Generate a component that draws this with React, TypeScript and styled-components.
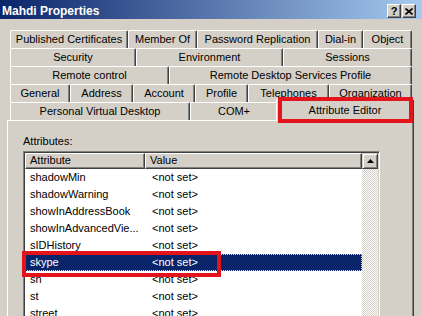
import React from "react";
import styled, { createGlobalStyle, css } from "styled-components";

const Global = createGlobalStyle`
  html, body { margin: 0; padding: 0; background: #D4D0C8; }
  body { font-family: "Liberation Sans", Arial, sans-serif; font-size: 11px; color: #000; }
`;

const Window = styled.div`
  position: relative;
  width: 422px;
  height: 316px;
  overflow: hidden;
  background: #d4d0c8;
  display: flex;
  flex-direction: column;
`;

const TitleBar = styled.div`
  height: 19px;
  flex: none;
  box-sizing: border-box;
  padding: 4px 6px 0 2px;
  background: linear-gradient(to right, #0a246a, #a6caf0);
  display: flex;
  align-items: flex-start;
`;

const Title = styled.div`
  flex: 1;
  color: #fff;
  font-weight: bold;
  font-size: 12px;
  line-height: 14px;
  white-space: nowrap;
`;

const CapButtons = styled.div`
  display: flex;
  gap: 1px;
`;

const CapButton = styled.div`
  width: 14px;
  height: 14px;
  box-sizing: border-box;
  background: #d4d0c8;
  border: 1px solid;
  border-color: #fff #404040 #404040 #fff;
  box-shadow: inset -1px -1px #808080;
  display: flex;
  align-items: center;
  justify-content: center;
  font-weight: bold;
  font-size: 11px;
  line-height: 1;
`;

const Body = styled.div`
  flex: 1;
  min-height: 0;
  display: flex;
  flex-direction: column;
  padding: 11px 8px 0 7px;
`;

const TabStack = styled.div`
  display: flex;
  flex-direction: column;
  margin: 0 2px 0 3px;
`;

const TabRow = styled.div`
  display: flex;
  height: 18px;
  align-items: flex-start;
`;

const Tab = styled.div<{ $w: number }>`
  width: ${(p) => p.$w}px;
  height: 18px;
  flex: none;
  box-sizing: border-box;
  background: #d4d0c8;
  border-top: 1px solid #fff;
  border-left: 1px solid #fff;
  border-right: 1px solid #404040;
  box-shadow: inset -1px 0 #808080;
  border-radius: 2px 2px 0 0;
  text-align: center;
  line-height: 17px;
  white-space: nowrap;
  overflow: hidden;
`;

const ActiveTab = styled(Tab)`
  position: relative;
  z-index: 1;
  height: 22px;
  margin: -3px -2px 0 -2px;
  line-height: 20px;
`;

const Panel = styled.div`
  flex: 1;
  box-sizing: border-box;
  border-top: 1px solid #fff;
  border-left: 1px solid #fff;
  border-right: 1px solid #404040;
  box-shadow: inset -1px 0 #808080;
  padding: 14px 0 0 15px;
  display: flex;
  flex-direction: column;
`;

const Label = styled.div`
  line-height: 13px;
  margin-bottom: 3px;
`;

const ListBox = styled.div`
  width: 357px;
  height: 180px;
  flex: none;
  box-sizing: border-box;
  border: 1px solid;
  border-color: #808080 #fff #fff #808080;
  box-shadow: inset 1px 1px #404040, inset -1px -1px #d4d0c8;
  padding: 1px;
  background: #fff;
  display: flex;
`;

const ListMain = styled.div`
  flex: 1;
  min-width: 0;
  display: flex;
  flex-direction: column;
`;

const HeaderRow = styled.div`
  display: flex;
  height: 16px;
  flex: none;
`;

const HeaderCell = styled.div<{ $w?: number }>`
  ${(p) => (p.$w ? `width: ${p.$w}px; flex: none;` : "flex: 1;")}
  box-sizing: border-box;
  background: #d4d0c8;
  border-top: 1px solid #fff;
  border-left: 1px solid #fff;
  border-right: 1px solid #404040;
  border-bottom: 1px solid #404040;
  box-shadow: inset -1px -1px #808080;
  padding-left: 4px;
  line-height: 13px;
  white-space: nowrap;
`;

const Row = styled.div<{ $sel?: boolean }>`
  display: flex;
  height: 17px;
  flex: none;
  line-height: 17px;
  white-space: nowrap;
  ${(p) =>
    p.$sel &&
    css`
      background: #0a246a;
      color: #fff;
      outline: 1px dotted #f5db95;
      outline-offset: -1px;
    `}
`;

const AttrCell = styled.div`
  width: 120px;
  flex: none;
  box-sizing: border-box;
  padding-left: 5px;
  overflow: hidden;
`;

const ValueCell = styled.div`
  flex: 1;
  padding-left: 7px;
`;

const ScrollBar = styled.div`
  width: 16px;
  flex: none;
  display: flex;
  flex-direction: column;
  background: repeating-conic-gradient(#d4d0c8 0 25%, #fff 0 50%) 0 0 / 2px 2px;
`;

const ScrollButton = styled.div`
  width: 16px;
  height: 16px;
  box-sizing: border-box;
  background: #d4d0c8;
  border: 1px solid;
  border-color: #d4d0c8 #404040 #404040 #d4d0c8;
  box-shadow: inset 1px 1px #fff, inset -1px -1px #808080;
  display: flex;
  align-items: center;
  justify-content: center;
`;

const Highlight = styled.div<{ $x: number; $y: number; $w: number; $h: number }>`
  position: absolute;
  left: ${(p) => p.$x}px;
  top: ${(p) => p.$y}px;
  width: ${(p) => p.$w}px;
  height: ${(p) => p.$h}px;
  box-sizing: border-box;
  border: 4px solid #e3141b;
  pointer-events: none;
  z-index: 5;
`;

const rows1: [string, number][] = [
  ["Published Certificates", 118],
  ["Member Of", 69],
  ["Password Replication", 121],
  ["Dial-in", 45],
  ["Object", 49],
];
const rows2: [string, number][] = [
  ["Security", 126],
  ["Environment", 147],
  ["Sessions", 129],
];
const rows3: [string, number][] = [
  ["Remote control", 159],
  ["Remote Desktop Services Profile", 243],
];
const rows4: [string, number][] = [
  ["General", 60],
  ["Address", 63],
  ["Account", 62],
  ["Profile", 53],
  ["Telephones", 81],
  ["Organization", 83],
];

const attrs = [
  "shadowMin",
  "shadowWarning",
  "showInAddressBook",
  "showInAdvancedVie...",
  "sIDHistory",
  "skype",
  "sn",
  "st",
  "street",
];

export default function App() {
  const tabRows = [rows1, rows2, rows3, rows4];
  return (
    <>
      <Global />
      <Window>
        <TitleBar>
          <Title>Mahdi Properties</Title>
          <CapButtons>
            <CapButton>?</CapButton>
            <CapButton>
              <svg width="8" height="7" viewBox="0 0 8 7">
                <path d="M0.5 0.5 L7.5 6.5 M7.5 0.5 L0.5 6.5" stroke="#000" strokeWidth="1.6" />
              </svg>
            </CapButton>
          </CapButtons>
        </TitleBar>
        <Body>
          <TabStack>
            {tabRows.map((r, i) => (
              <TabRow key={i}>
                {r.map(([t, w]) => (
                  <Tab key={t} $w={w}>
                    {t}
                  </Tab>
                ))}
              </TabRow>
            ))}
            <TabRow>
              <Tab $w={180}>Personal Virtual Desktop</Tab>
              <Tab $w={88}>COM+</Tab>
              <ActiveTab $w={138}>Attribute Editor</ActiveTab>
            </TabRow>
          </TabStack>
          <Panel>
            <Label>Attributes:</Label>
            <ListBox>
              <ListMain>
                <HeaderRow>
                  <HeaderCell $w={120}>Attribute</HeaderCell>
                  <HeaderCell>Value</HeaderCell>
                </HeaderRow>
                {attrs.map((a) => (
                  <Row key={a} $sel={a === "skype"}>
                    <AttrCell>{a}</AttrCell>
                    <ValueCell>&lt;not set&gt;</ValueCell>
                  </Row>
                ))}
              </ListMain>
              <ScrollBar>
                <ScrollButton>
                  <svg width="7" height="4" viewBox="0 0 7 4">
                    <polygon points="0,4 7,4 3.5,0" fill="#000" />
                  </svg>
                </ScrollButton>
              </ScrollBar>
            </ListBox>
          </Panel>
        </Body>
        <Highlight $x={278} $y={97} $w={135} $h={26} />
        <Highlight $x={22} $y={251} $w={199} $h={26} />
      </Window>
    </>
  );
}
